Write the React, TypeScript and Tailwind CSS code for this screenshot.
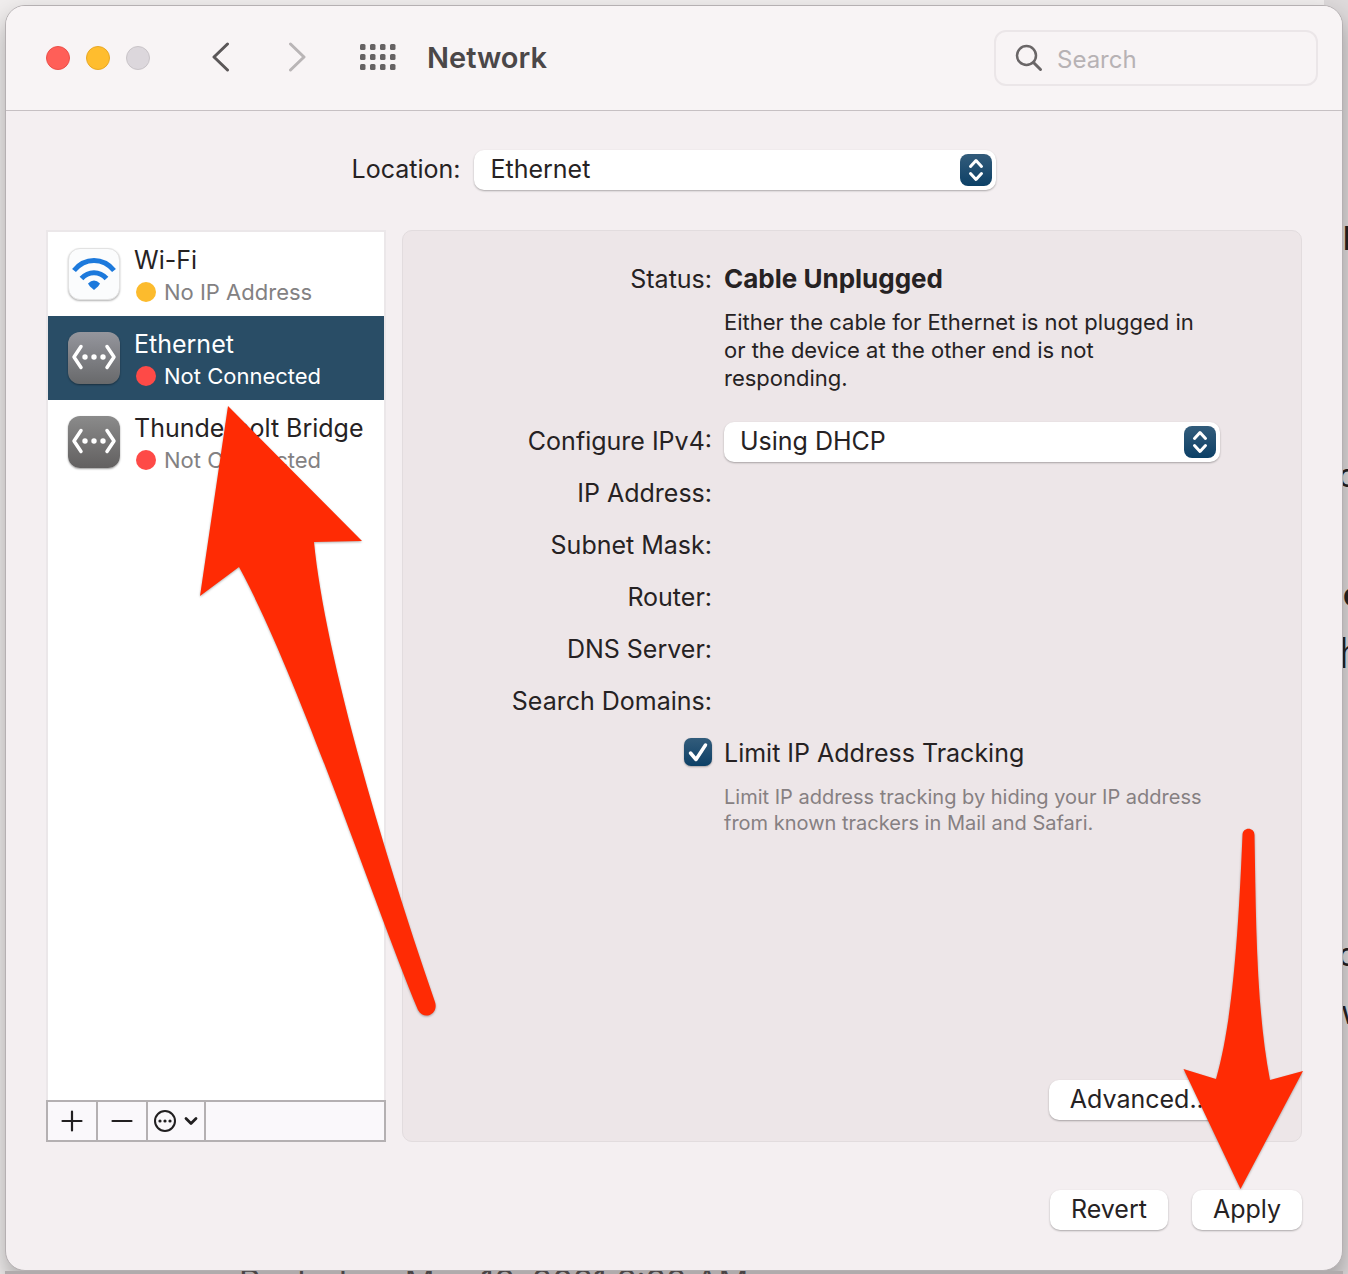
import { useState } from 'react';
import type { ReactNode } from 'react';
import clsx from 'clsx';

type Status = 'warning' | 'error';

interface Service {
  id: string;
  name: string;
  detail: string;
  status: Status;
}

const SERVICES: Service[] = [
  { id: 'wifi', name: 'Wi-Fi', detail: 'No IP Address', status: 'warning' },
  { id: 'ethernet', name: 'Ethernet', detail: 'Not Connected', status: 'error' },
  { id: 'thunderbolt', name: 'Thunderbolt Bridge', detail: 'Not Connected', status: 'error' },
];

const EMPTY_FIELDS = ['IP Address:', 'Subnet Mask:', 'Router:', 'DNS Server:', 'Search Domains:'];

function WifiIcon() {
  return (
    <span className="block size-[52px] shrink-0 rounded-xl border border-[#e2e2e2] bg-[#fbfcfd] shadow-[0_1px_2px_rgba(0,0,0,0.3)]">
      <svg viewBox="1 1 50 50" className="size-full" fill="none" stroke="#1c79dc" strokeWidth="5">
        <path d="M6 22.500C17 9.200 35 9.200 46 22.500" />
        <path d="M13.500 30.500C20.500 22.700 31.500 22.700 38.500 30.500" />
        <path d="M20 35.500Q26 29.500 32 35.500Q31 38 26 42Q21 38 20 35.500Z" fill="#1c79dc" stroke="none" />
      </svg>
    </span>
  );
}

function EthernetIcon({ selected }: { selected: boolean }) {
  return (
    <span
      className={clsx(
        'block size-[52px] shrink-0 rounded-xl bg-linear-to-b shadow-[0_1px_2px_rgba(0,0,0,0.4)]',
        selected ? 'from-[#95969d] to-[#68696b]' : 'from-[#8b8b8b] to-[#626060]',
      )}
    >
      <svg viewBox="0 0 52 52" className="size-full" fill="none" stroke="#fff" strokeWidth="3.500" strokeLinecap="round" strokeLinejoin="round">
        <path d="M13 14.500 6 25l7 10.500M39 14.500 46 25l-7 10.500" />
        <g fill="#fff" stroke="none">
          <circle cx="17" cy="25" r="2.700" />
          <circle cx="26" cy="25" r="2.700" />
          <circle cx="35" cy="25" r="2.700" />
        </g>
      </svg>
    </span>
  );
}

interface PopupProps {
  id: string;
  value: string;
  className?: string;
}

function Popup({ id, value, className }: PopupProps) {
  return (
    <div className={clsx('relative h-10', className)}>
      <select
        id={id}
        className="h-10 w-full appearance-none rounded-[10px] bg-white pr-10 pl-4 shadow-[0_1px_2px_rgba(0,0,0,0.3)] outline-none"
      >
        <option>{value}</option>
      </select>
      <span className="pointer-events-none absolute top-1 right-1 size-8 rounded-lg bg-linear-to-b from-[#325c7b] to-[#0b4066]">
        <svg viewBox="0 0 32 32" className="size-full" fill="none" stroke="#fff" strokeWidth="3" strokeLinecap="round" strokeLinejoin="round">
          <path d="m10.500 12.500 5.500-6 5.500 6M10.500 19.500l5.500 6 5.500-6" />
        </svg>
      </span>
    </div>
  );
}

function PushButton({ children, className }: { children: ReactNode; className?: string }) {
  return (
    <button
      type="button"
      className={clsx('h-10 rounded-[10px] bg-white px-[21px] shadow-[0_1px_2px_rgba(0,0,0,0.3)]', className)}
    >
      {children}
    </button>
  );
}

function Toolbar() {
  return (
    <header className="flex h-[105px] items-center border-b border-[#c6c0c3] bg-[#f8f4f5] px-6 pl-10">
      <div className="flex gap-4">
        <button type="button" aria-label="Close" className="size-6 rounded-full border border-[#ec4f49] bg-[#ff5f58]" />
        <button type="button" aria-label="Minimize" className="size-6 rounded-full border border-[#e9a824] bg-[#ffbd2e]" />
        <button type="button" aria-label="Zoom" className="size-6 rounded-full border border-[#c9c4c8] bg-[#dcd7dc]" />
      </div>
      <button type="button" aria-label="Back" className="ml-14 p-1">
        <svg viewBox="0 0 24 32" className="h-8 w-6" fill="none" stroke="#5b5758" strokeWidth="3" strokeLinecap="round" strokeLinejoin="round">
          <path d="M17.500 2 4 15l13.500 13" />
        </svg>
      </button>
      <button type="button" aria-label="Forward" className="ml-11 p-1">
        <svg viewBox="0 0 24 32" className="h-8 w-6" fill="none" stroke="#b9b5b6" strokeWidth="3" strokeLinecap="round" strokeLinejoin="round">
          <path d="M4.500 2 18 15 4.500 28" />
        </svg>
      </button>
      <button type="button" aria-label="Show All" className="ml-[46px]">
        <svg viewBox="0 0 36 28" className="h-7 w-9" fill="#666263">
          {[0, 10, 20].map(y =>
            [0, 10, 20, 30].map(x => <rect key={`${x}-${y}`} x={x} y={y} width="5.500" height="6" rx="1.500" />),
          )}
        </svg>
      </button>
      <h1 className="ml-[31px] text-[29px] font-semibold text-[#4b4748]">Network</h1>
      <label className="ml-auto flex h-14 w-[324px] items-center gap-3.5 rounded-xl border-2 border-[#ebe6e8] pl-[19px]">
        <svg viewBox="0 0 28 28" className="size-7 shrink-0" fill="none" stroke="#6a6667" strokeWidth="2.500" strokeLinecap="round">
          <circle cx="11.500" cy="11.500" r="9.500" />
          <path d="m18.500 18.500 7 7" strokeWidth="3" />
        </svg>
        <input
          type="search"
          aria-label="Search"
          placeholder="Search"
          className="w-full min-w-0 bg-transparent pt-1 text-2xl outline-none placeholder:text-[#b7b2b4]"
        />
      </label>
    </header>
  );
}

interface ServiceListProps {
  selected: string;
  onSelect: (id: string) => void;
}

function ServiceList({ selected, onSelect }: ServiceListProps) {
  return (
    <aside className="flex w-[340px] shrink-0 flex-col">
      <div className="flex-1 border-2 border-b-0 border-[#ebe7e9] bg-white">
        {SERVICES.map(s => {
          const active = s.id === selected;
          return (
            <button
              key={s.id}
              type="button"
              onClick={() => onSelect(s.id)}
              className={clsx(
                'flex h-21 w-full items-center gap-3.5 pl-5 text-left',
                active && 'bg-[#294d66] text-white',
              )}
            >
              {s.id === 'wifi' ? <WifiIcon /> : <EthernetIcon selected={active} />}
              <span className="flex flex-col pt-1">
                <span className="leading-8 whitespace-nowrap">{s.name}</span>
                <span className={clsx('flex items-center gap-2 pl-0.5 text-[22px] leading-8', !active && 'text-[#838182]')}>
                  <span className={clsx('size-5 rounded-full', s.status === 'warning' ? 'bg-[#fcbb2d]' : 'bg-[#fe4a47]')} />
                  {s.detail}
                </span>
              </span>
            </button>
          );
        })}
      </div>
      <div className="flex h-[42px] border-2 border-[#b4b0b2] bg-[#faf8fb]">
        <button type="button" aria-label="Add service" className="flex w-[50px] items-center justify-center border-r-2 border-[#b4b0b2]">
          <svg viewBox="0 0 22 22" className="size-[22px]" stroke="#211f20" strokeWidth="2.200" strokeLinecap="round">
            <path d="M11 1.500v19M1.500 11h19" />
          </svg>
        </button>
        <button type="button" aria-label="Remove service" className="flex w-[50px] items-center justify-center border-r-2 border-[#b4b0b2]">
          <svg viewBox="0 0 22 22" className="size-[22px]" stroke="#211f20" strokeWidth="2.200" strokeLinecap="round">
            <path d="M1.500 11h19" />
          </svg>
        </button>
        <button type="button" aria-label="More actions" className="flex w-[58px] items-center justify-center gap-2 border-r-2 border-[#b4b0b2]">
          <svg viewBox="0 0 22 22" className="size-[22px]" fill="none" stroke="#211f20" strokeWidth="2">
            <circle cx="11" cy="11" r="10" />
            <g fill="#211f20" stroke="none">
              <circle cx="6" cy="11" r="1.600" />
              <circle cx="11" cy="11" r="1.600" />
              <circle cx="16" cy="11" r="1.600" />
            </g>
          </svg>
          <svg viewBox="0 0 14 10" className="h-2.5 w-3.5" fill="none" stroke="#211f20" strokeWidth="2.800" strokeLinecap="round" strokeLinejoin="round">
            <path d="m2 2.500 5 5 5-5" />
          </svg>
        </button>
      </div>
    </aside>
  );
}

function DetailPanel() {
  const [limit, setLimit] = useState(true);

  return (
    <section className="flex min-w-0 flex-1 flex-col rounded-[10px] border border-[#e2dcde] bg-[#ede6e8] pt-6 pb-[21px]">
      <div className="grid grid-cols-[309px_minmax(0,1fr)] gap-x-3 pr-[81px]">
        <span className="text-right leading-12">Status:</span>
        <strong className="text-[26px] leading-12 font-bold">Cable Unplugged</strong>
        <p className="col-start-2 mt-[5px] mb-6 text-[22px] leading-7">
          Either the cable for Ethernet is not plugged in
          <br />
          or the device at the other end is not
          <br />
          responding.
        </p>

        <label htmlFor="ipv4" className="text-right leading-[50px]">Configure IPv4:</label>
        <Popup id="ipv4" value="Using DHCP" className="my-1.5" />
        {EMPTY_FIELDS.map(field => (
          <span key={field} className="col-start-1 pb-0.5 text-right leading-[50px]">{field}</span>
        ))}

        <span className="relative col-start-1 mt-2.5 size-7 justify-self-end">
          <input
            id="limit"
            type="checkbox"
            checked={limit}
            onChange={e => setLimit(e.target.checked)}
            className="block size-7 appearance-none rounded-[7px] bg-white shadow-[0_1px_2px_rgba(0,0,0,0.3)] checked:bg-linear-to-b checked:from-[#325c7b] checked:to-[#0b4066]"
          />
          {limit && (
            <svg viewBox="0 0 28 28" className="pointer-events-none absolute inset-0" fill="none" stroke="#fff" strokeWidth="3.500" strokeLinecap="round" strokeLinejoin="round">
              <path d="m6.500 15 5.500 6.500L21.500 7" />
            </svg>
          )}
        </span>
        <label htmlFor="limit" className="pb-0.5 leading-[50px]">Limit IP Address Tracking</label>
        <p className="col-start-2 mt-1 text-xl leading-[26px] whitespace-nowrap text-[#868082]">
          Limit IP address tracking by hiding your IP address
          <br />
          from known trackers in Mail and Safari.
        </p>
      </div>
      <PushButton className="mt-auto mr-[69px] self-end">Advanced...</PushButton>
    </section>
  );
}

// Hand-drawn pointers laid over the window
function Arrows() {
  return (
    <>
      <svg viewBox="0 0 240 614" className="pointer-events-none absolute top-[405px] left-[198px] h-[614px] w-[240px] drop-shadow-[0_1px_1px_rgba(0,0,0,0.3)]" fill="#ff2b04">
        <path d="M30 1 164 136 116 137C126 240 176 420 237 597C241 609 226 616 220 605C180 510 100 270 41 162L2 191Z" />
      </svg>
      <svg viewBox="0 0 124 364" className="pointer-events-none absolute top-[827px] right-[42px] h-[364px] w-[124px] drop-shadow-[0_1px_1px_rgba(0,0,0,0.3)]" fill="#ff2b04">
        <path d="M58.500 362 1.500 242 34 252C52 190 57 90 60.500 8C60.500-.5 72.500-.5 72.500 8C74 90 74 180 88 253L121 244Z" />
      </svg>
    </>
  );
}

export default function App() {
  const [selected, setSelected] = useState('ethernet');

  return (
    <div className="relative min-h-screen overflow-hidden bg-[#f0eded] p-[5px] pb-0 font-['Inter','Noto_Sans',sans-serif] text-[25px] text-[#262223]">
      {/* Page behind the window */}
      <div aria-hidden="true" className="absolute inset-y-0 right-0 w-6 bg-[#dedadb] text-[32px] leading-10 text-[#262223]">
        <span className="absolute top-[219px] left-[19px] font-bold">I</span>
        <span className="absolute top-[456px] left-[14px]">o</span>
        <span className="absolute top-[575px] left-[19px] font-bold">e</span>
        <span className="absolute top-[633px] left-[15px] text-[42px] font-light">h</span>
        <span className="absolute top-[935px] left-[14px]">o</span>
        <span className="absolute top-[993px] left-[17px]">w</span>
      </div>

      <main className="relative rounded-[20px] border border-[#b5b0b2] bg-[#f4eff1] shadow-[0_12px_24px_rgba(0,0,0,0.3)]">
        <div className="overflow-hidden rounded-t-[19px]">
          <Toolbar />
        </div>
        <div className="px-10 pt-[39px] pb-10">
          <div className="flex items-center justify-center gap-3.5">
            <label htmlFor="location">Location:</label>
            <Popup id="location" value="Ethernet" className="w-[522px]" />
          </div>
          <div className="mt-10 flex h-[912px] gap-4">
            <ServiceList selected={selected} onSelect={setSelected} />
            <DetailPanel />
          </div>
          <div className="mt-12 flex justify-end gap-6">
            <PushButton>Revert</PushButton>
            <PushButton>Apply</PushButton>
          </div>
        </div>
      </main>
      <div aria-hidden="true" className="relative h-[3px] overflow-hidden bg-[#b0abac] pl-[234px] text-[33px] leading-5 text-[#4a4546]">
        Posted on May 16, 2021 6:32 AM
      </div>

      <Arrows />
    </div>
  );
}
